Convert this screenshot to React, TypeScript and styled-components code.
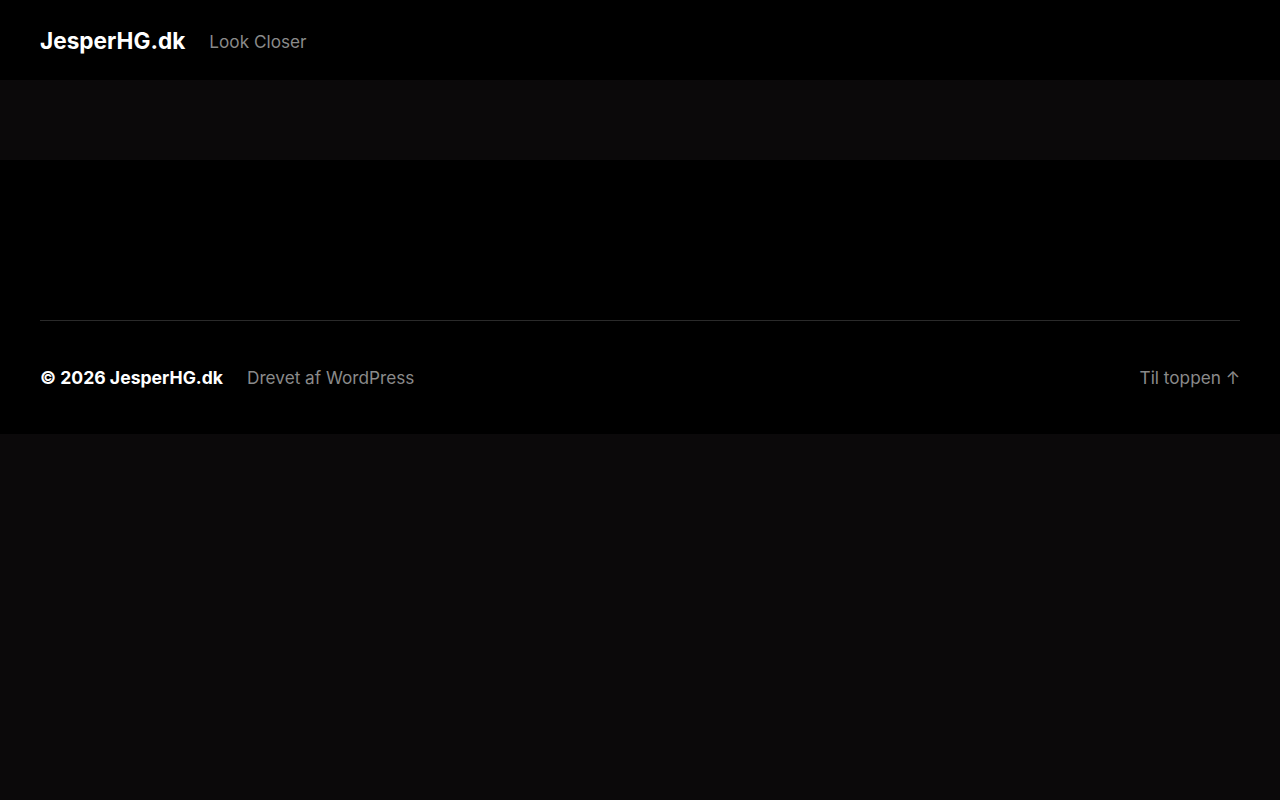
import React from 'react'
import styled, { createGlobalStyle } from 'styled-components'

const Global = createGlobalStyle`
  html, body {
    margin: 0;
    padding: 0;
    background: #0b090a;
    font-family: Inter, "Noto Sans", sans-serif;
    -webkit-font-smoothing: antialiased;
  }
`

const Page = styled.div`
  display: flex;
  flex-direction: column;
`

const Header = styled.header`
  height: 80px;
  background: #000;
  display: flex;
  align-items: center;
  gap: 24px;
  padding: 0 40px;
  box-sizing: border-box;
`

const SiteTitle = styled.a`
  color: #fff;
  font-size: 22.6px;
  font-weight: 700;
  letter-spacing: 0;
  text-decoration: none;
`

const NavLink = styled.a<{ $bold?: boolean }>`
  color: ${(p) => (p.$bold ? '#fff' : '#8a8a8a')};
  font-size: ${(p) => (p.$bold ? '17.6px' : '17.2px')};
  font-weight: ${(p) => (p.$bold ? 700 : 400)};
  text-decoration: none;
  line-height: 27px;
`

const HeaderNav = styled(NavLink)`
  padding-top: 2px;
`

const Band = styled.div`
  height: 80px;
  background: #0b090a;
`

const Main = styled.main`
  height: 160px;
  background: #000;
`

const Footer = styled.footer`
  background: #000;
  padding: 0 40px;
`

const FooterRow = styled.div`
  border-top: 1px solid #2a2a2a;
  padding: 43px 0;
  display: flex;
  align-items: center;
  justify-content: space-between;
`

const FooterLeft = styled.div`
  display: flex;
  align-items: center;
  gap: 24px;
`

function App() {
  return (
    <Page>
      <Global />
      <Header>
        <SiteTitle href="#">JesperHG.dk</SiteTitle>
        <HeaderNav href="#">Look Closer</HeaderNav>
      </Header>
      <Band />
      <Main />
      <Footer>
        <FooterRow>
          <FooterLeft>
            <NavLink $bold>© 2026 JesperHG.dk</NavLink>
            <NavLink href="#">Drevet af WordPress</NavLink>
          </FooterLeft>
          <NavLink href="#">Til toppen ↑</NavLink>
        </FooterRow>
      </Footer>
    </Page>
  )
}

export default App
